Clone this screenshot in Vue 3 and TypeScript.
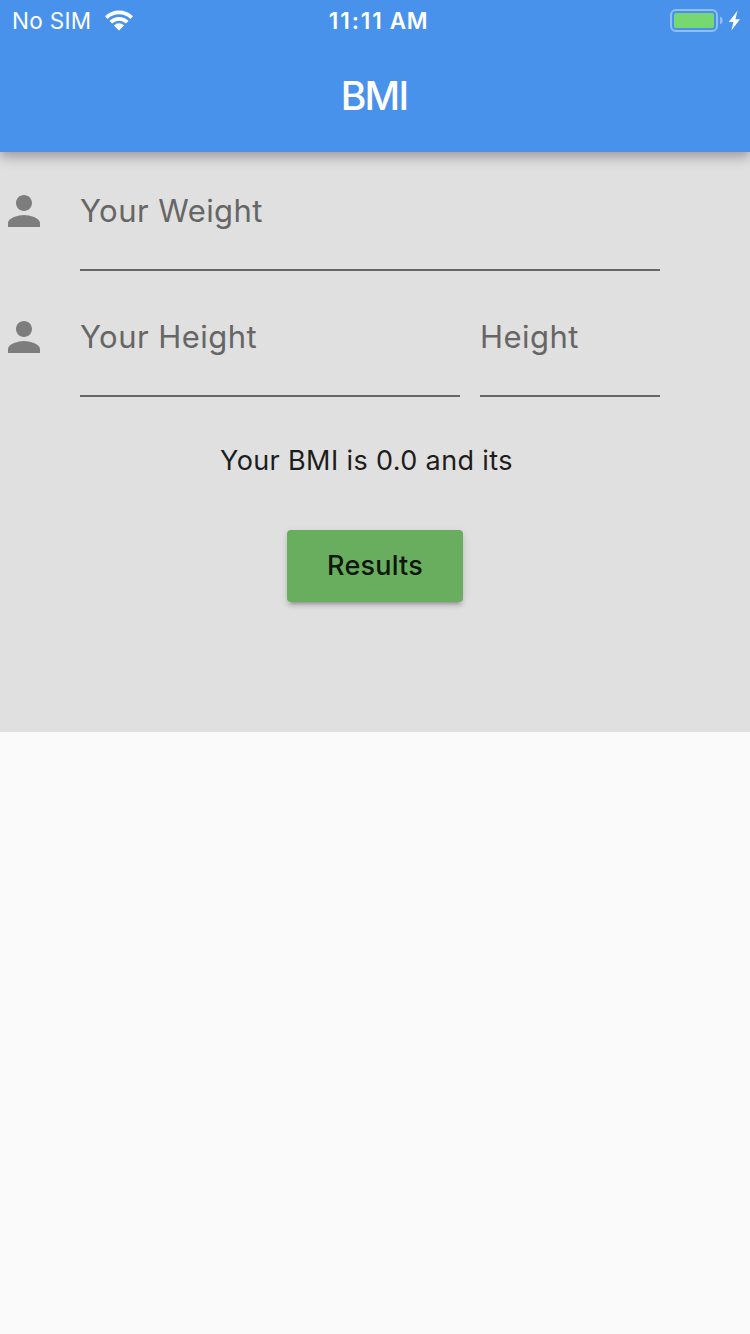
<script setup lang="ts">
interface Field {
  id: string
  label: string
  size: 'full' | 'wide' | 'narrow'
}

const rows: Field[][] = [
  [{ id: 'weight', label: 'Your Weight', size: 'full' }],
  [
    { id: 'height', label: 'Your Height', size: 'wide' },
    { id: 'height-inches', label: 'Height', size: 'narrow' },
  ],
]
</script>

<template>
  <div class="screen">
    <header class="app-bar">
      <div class="status">
        <div class="side left">
          <span class="carrier">No SIM</span>
          <svg class="wifi" width="30" height="22" viewBox="0 0 30 22">
            <path d="M1 6.2a20 20 0 0 1 28 0l-2.6 2.7a16.4 16.4 0 0 0-22.8 0z" />
            <path d="M5.4 11a13.8 13.8 0 0 1 19.2 0l-2.7 2.6a10 10 0 0 0-13.8 0z" />
            <path d="M9.9 15.4a7.4 7.4 0 0 1 10.2 0L15 20.4z" />
          </svg>
        </div>
        <span class="clock"><span class="digits">11:11</span> AM</span>
        <div class="side right">
          <svg class="battery" width="72" height="24" viewBox="0 0 72 24">
            <rect x="1" y="1" width="46" height="21" rx="5" fill="none" stroke="#fff" stroke-opacity=".4" stroke-width="2" />
            <rect x="4" y="4" width="40" height="15" rx="2" fill="#77d872" />
            <path d="M50 7.5c3.6 1.2 3.6 6.8 0 8z" fill="#fff" fill-opacity=".4" />
            <path d="M67.6 1.6L58.8 13h4.6l-2 8.6L70 10.2h-4.6z" fill="#fff" />
          </svg>
        </div>
      </div>
      <h1 class="title">BMI</h1>
    </header>

    <main class="panel">
      <div v-for="(row, i) in rows" :key="i" class="row">
        <svg class="person" width="48" height="48" viewBox="0 0 24 24">
          <path d="M12 12c2.21 0 4-1.79 4-4s-1.79-4-4-4-4 1.79-4 4 1.79 4 4 4zm0 2c-2.67 0-8 1.34-8 4v2h16v-2c0-2.66-5.33-4-8-4z" />
        </svg>
        <div v-for="field in row" :key="field.id" class="field" :class="field.size">
          <span class="label">{{ field.label }}</span>
        </div>
      </div>
      <p class="summary">Your BMI is 0.0 and its</p>
      <button class="results" type="button"><span>Results</span></button>
    </main>
  </div>
</template>

<style>
body {
  margin: 0;
  background: #fafafa;
}
</style>

<style scoped>
.screen {
  width: 750px;
  height: 1334px;
  overflow: hidden;
  background: #fafafa;
  font-family: Inter, "Liberation Sans", sans-serif;
}
.app-bar {
  position: relative;
  height: 152px;
  background: #4992ec;
  color: #fff;
  box-shadow: 0 4px 8px -2px rgba(0, 0, 0, 0.17), 0 8px 10px rgba(0, 0, 0, 0.12), 0 2px 20px rgba(0, 0, 0, 0.08);
}
.status {
  display: flex;
  align-items: center;
  height: 42px;
  line-height: 42px;
}
.side {
  flex: 1;
  display: flex;
  align-items: center;
}
.left {
  padding-left: 12px;
}
.right {
  justify-content: flex-end;
  padding-right: 8px;
}
.carrier {
  width: 81px;
  font-size: 22.5px;
  letter-spacing: 0.3px;
  white-space: nowrap;
}
.wifi {
  margin-left: 11px;
  fill: #fff;
}
.clock {
  padding-left: 3px;
  font-size: 22.5px;
  font-weight: 600;
  letter-spacing: 0.6px;
}
.digits {
  letter-spacing: 1.9px;
}
.title {
  margin: 0;
  height: 110px;
  line-height: 107px;
  text-align: center;
  font-size: 39px;
  font-weight: 500;
  letter-spacing: -1.7px;
  padding-right: 2px;
}
.panel {
  box-sizing: border-box;
  height: 580px;
  background: #e0e0e0;
  display: flex;
  flex-direction: column;
}
.row {
  display: flex;
  height: 126px;
}
.person {
  margin: 35px 32px 0 0;
  fill: #7d7d7d;
}
.field {
  box-sizing: border-box;
  height: 119px;
  border-bottom: 2px solid #666;
  margin-right: 20px;
}
.full {
  width: 580px;
}
.wide {
  width: 380px;
}
.narrow {
  width: 180px;
}
.label {
  display: block;
  padding-top: 38px;
  line-height: 41px;
  font-size: 31px;
  letter-spacing: 0.45px;
  color: #666;
  white-space: nowrap;
}
.summary {
  margin: 36px 0 0 220px;
  line-height: 41px;
  height: 40px;
  font-size: 27px;
  letter-spacing: 0.38px;
  color: #1c1c1c;
  white-space: nowrap;
}
.results {
  align-self: center;
  width: 176px;
  height: 72px;
  margin: 50px 0 0;
  padding: 0;
  border: 0;
  border-radius: 4px;
  background: #69ae5e;
  color: #0e160d;
  font: 500 27px/72px Inter, "Liberation Sans", sans-serif;
  letter-spacing: 0.2px;
  box-shadow: 0 6px 2px -4px rgba(0, 0, 0, 0.16), 0 4px 4px rgba(0, 0, 0, 0.12), 0 2px 10px rgba(0, 0, 0, 0.08);
}
</style>
